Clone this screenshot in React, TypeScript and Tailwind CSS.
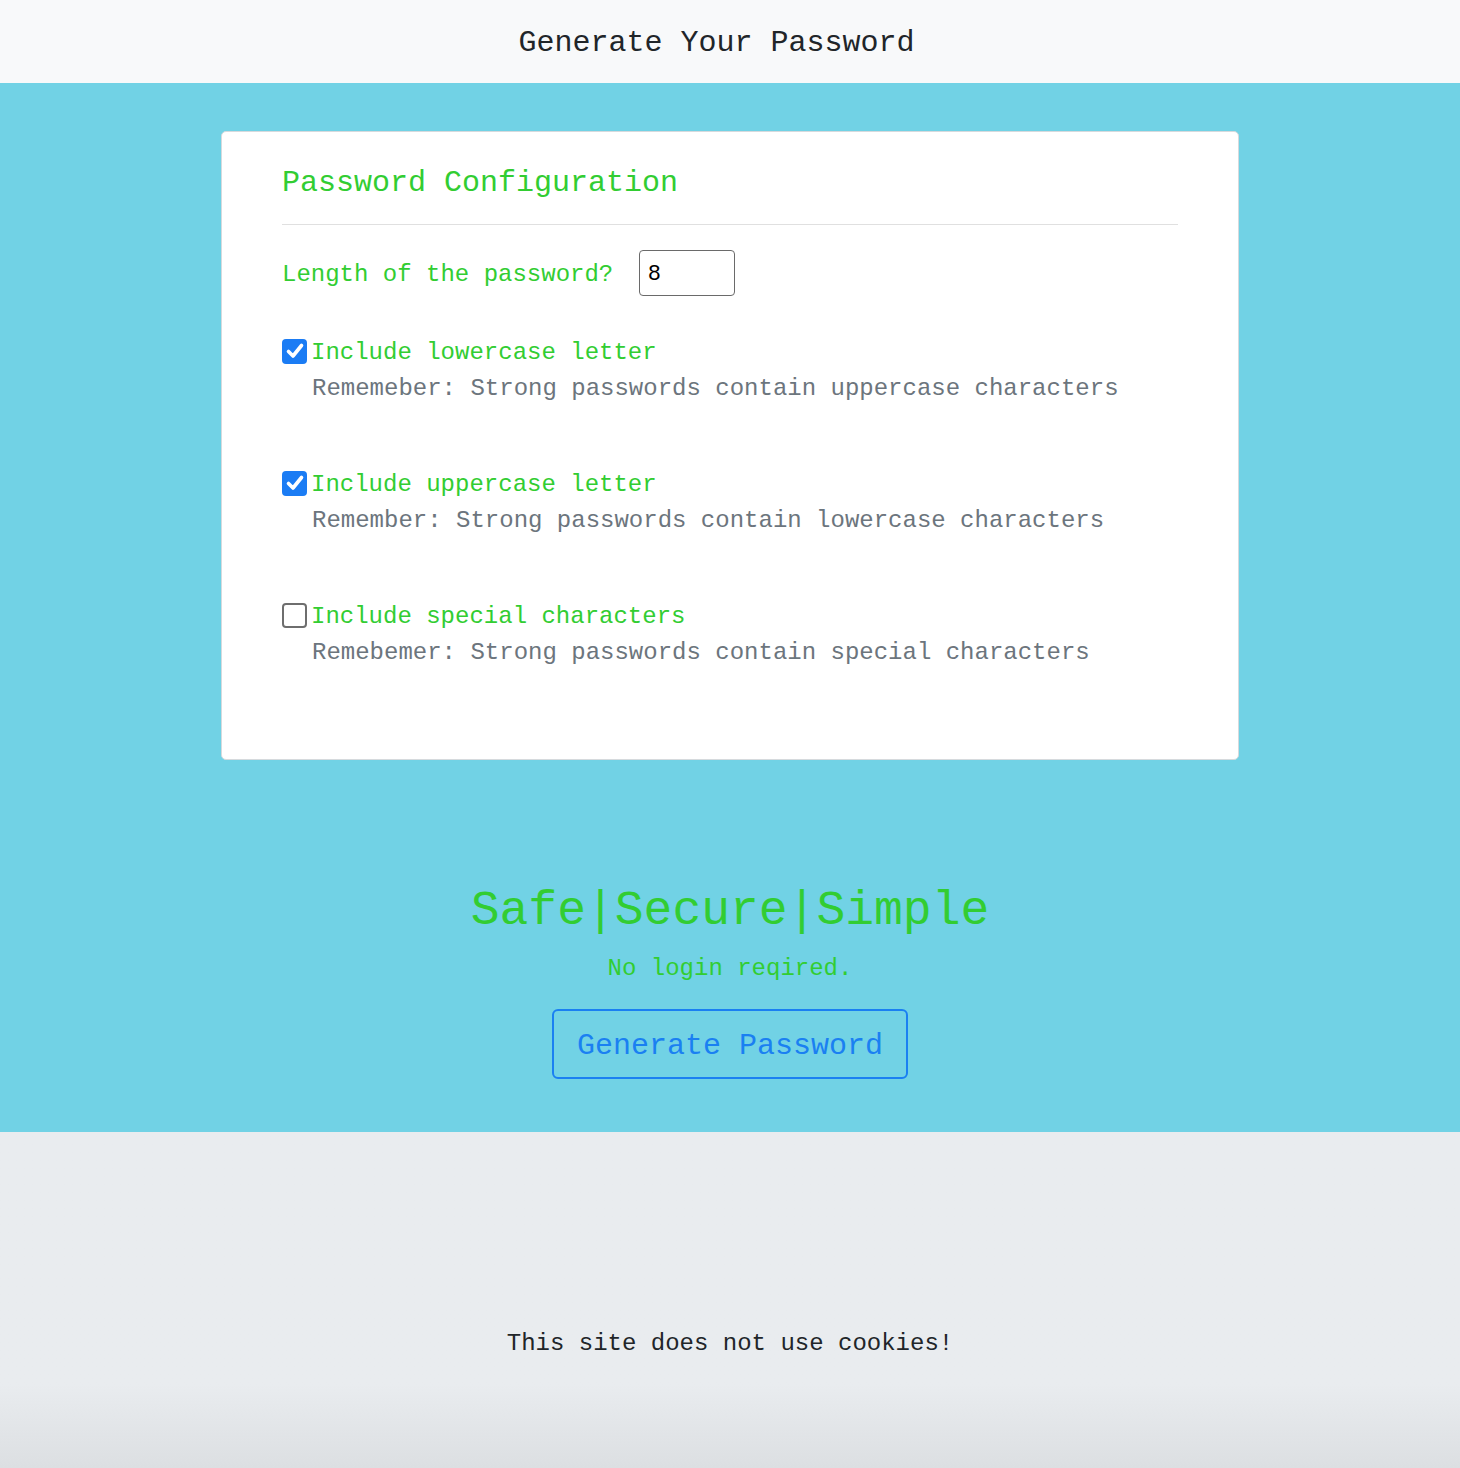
import { useState } from 'react'

const options = [
  {
    id: 'lower',
    label: 'Include lowercase letter',
    hint: 'Rememeber: Strong passwords contain uppercase characters',
    checked: true,
  },
  {
    id: 'upper',
    label: 'Include uppercase letter',
    hint: 'Remember: Strong passwords contain lowercase characters',
    checked: true,
  },
  {
    id: 'special',
    label: 'Include special characters',
    hint: 'Remebemer: Strong passwords contain special characters',
    checked: false,
  },
]

const Checkbox = ({ checked, onClick }: { checked: boolean; onClick: () => void }) => (
  <button
    type="button"
    onClick={onClick}
    className={
      checked
        ? 'w-[25px] h-[25px] shrink-0 rounded-[4px] bg-[#1b7cf4] flex items-center justify-center'
        : 'w-[25px] h-[25px] shrink-0 rounded-[4px] bg-white border-2 border-[#6e6e6e]'
    }
  >
    {checked && (
      <svg width="20" height="20" viewBox="0 0 20 20" fill="none">
        <path
          d="M3.5 10.5 L8 15 L16.5 4.5"
          stroke="white"
          strokeWidth="3.6"
          strokeLinecap="round"
          strokeLinejoin="round"
        />
      </svg>
    )}
  </button>
)

export default function App() {
  const [length, setLength] = useState('8')
  const [checks, setChecks] = useState(options.map((o) => o.checked))

  const toggle = (i: number) =>
    setChecks(checks.map((c, j) => (j === i ? !c : c)))

  return (
    <div className="min-h-screen flex flex-col font-['Liberation_Mono',monospace]">
      <header className="h-[83px] bg-[#f8f9fa] flex items-center justify-center pr-[27px] pt-[2px]">
        <h1 className="text-[30px] leading-[36px] text-[#212529]">Generate Your Password</h1>
      </header>

      <main className="bg-[#71d2e5] pt-[48px] pb-[53px] flex flex-col items-center">
        <div className="w-[1018px] bg-white border border-[#d6dadd] rounded-[5px] pt-[33px] pb-[88px] px-[60px]">
          <h2 className="text-[30px] leading-[36px] text-[#32cd32]">Password Configuration</h2>
          <hr className="mt-[23px] border-t border-[#e0e0e0]" />

          <div className="mt-[25px] flex items-center h-[46px]">
            <label className="pt-[4px] text-[24px] leading-[36px] text-[#32cd32]">Length of the password?</label>
            <input
              type="text"
              value={length}
              onChange={(e) => setLength(e.target.value)}
              className="ml-[26px] w-[96px] h-[46px] border-[1.5px] border-[#6a6a6a] rounded-[4px] px-[8px] text-[22px] text-black font-['Liberation_Sans',sans-serif] outline-none"
            />
          </div>

          <div className="mt-[37px] flex flex-col gap-[58px]">
            {options.map((o, i) => (
              <div key={o.id}>
                <div className="flex items-center gap-[4px] h-[36px]">
                  <Checkbox checked={checks[i]} onClick={() => toggle(i)} />
                  <span className="pt-[4px] text-[24px] leading-[36px] text-[#32cd32]">{o.label}</span>
                </div>
                <p className="pl-[30px] pt-[2px] text-[24px] leading-[36px] text-[#6c757d]">{o.hint}</p>
              </div>
            ))}
          </div>
        </div>

        <h2 className="mt-[122px] text-[48px] leading-[58px] text-[#32cd32]">Safe|Secure|Simple</h2>
        <p className="mt-[11px] text-[24px] leading-[36px] text-[#32cd32]">No login reqired.</p>
        <button className="mt-[22px] w-[356px] h-[70px] pt-[4px] flex items-center justify-center border-2 border-[#1a80f2] rounded-[6px] text-[30px] leading-[36px] text-[#1a80f2]">
          Generate Password
        </button>
      </main>

      <footer className="h-[336px] pt-[194px] text-center bg-linear-to-b from-[#e9ecef] from-75% to-[#dcdfe2]">
        <p className="text-[24px] leading-[36px] text-[#212529]">This site does not use cookies!</p>
      </footer>
    </div>
  )
}
